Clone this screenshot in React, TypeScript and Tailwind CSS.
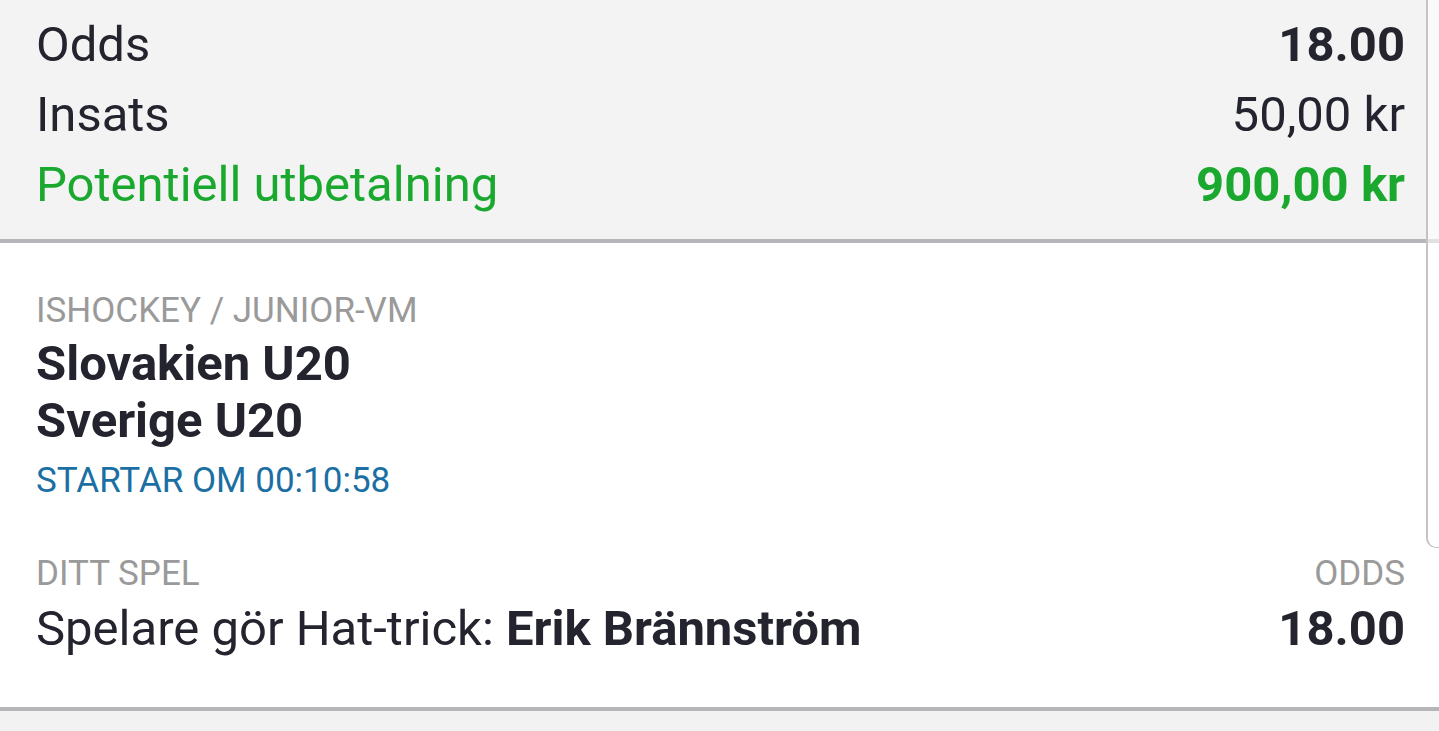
export default function App() {
  return (
    <div className="relative w-[1439px] h-[731px] overflow-hidden bg-[#f2f2f2] font-['Roboto',sans-serif] text-[#23242e]">
      {/* Summary */}
      <section className="bg-[#f3f3f3] pt-[10px] pb-[19px] pl-[36px] pr-[34px] border-b-4 border-[#b5b5ba]">
        <div className="flex justify-between items-center h-[70px] text-[49px] leading-[70px]">
          <span>Odds</span>
          <span className="font-bold">18.00</span>
        </div>
        <div className="flex justify-between items-center h-[70px] text-[49px] leading-[70px]">
          <span>Insats</span>
          <span>50,00 kr</span>
        </div>
        <div className="flex justify-between items-center h-[70px] text-[49px] leading-[70px] text-[#1aa82f]">
          <span>Potentiell utbetalning</span>
          <span className="font-bold">900,00 kr</span>
        </div>
      </section>

      {/* Bet card */}
      <section className="bg-white pt-[43px] pb-[50px] pl-[36px] pr-[34px] border-b-4 border-[#b5b5ba]">
        <div className="text-[35px] leading-[49px] text-[#9a9a9a]">ISHOCKEY / JUNIOR-VM</div>
        <div className="text-[49px] leading-[57px] font-bold">Slovakien U20</div>
        <div className="text-[49px] leading-[57px] font-bold">Sverige U20</div>
        <div className="mt-[7px] text-[35px] leading-[50px] text-[#1b6fa3]">STARTAR OM 00:10:58</div>

        <div className="mt-[42px] flex justify-between text-[35px] leading-[52px] text-[#9a9a9a]">
          <span>DITT SPEL</span>
          <span>ODDS</span>
        </div>
        <div className="flex justify-between text-[49px] leading-[57px]">
          <span>
            Spelare gör Hat-trick: <span className="font-bold">Erik Brännström</span>
          </span>
          <span className="font-bold">18.00</span>
        </div>
      </section>

      {/* scroll edge overlay */}
      <div className="absolute top-0 right-0 w-[13px] h-[548px] border-l-2 border-b border-[#c4c4c4] rounded-bl-[10px] bg-white/60" />
    </div>
  );
}
